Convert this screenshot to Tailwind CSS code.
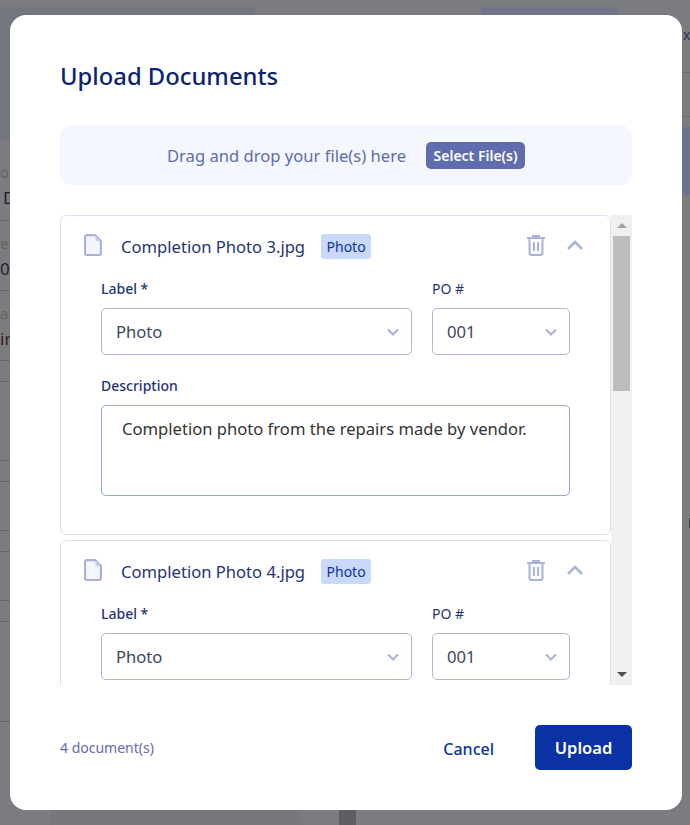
<!doctype html>
<html lang="en">

<head>
    <meta charset="UTF-8">
    <title>Upload Documents</title>
    <script src="https://cdn.jsdelivr.net/npm/@tailwindcss/browser@4"></script>
</head>

<body class="bg-[#7b7c80] font-['Noto_Sans',sans-serif]">

    <div class="relative w-[690px] h-[825px] overflow-hidden">

        <!-- Dimmed page behind the modal -->
        <div class="absolute left-0 top-[7px] w-[255px] h-[133px] bg-[#74767f]"></div>
        <div class="absolute left-[481px] top-[7px] w-[136px] h-[10px] bg-[#70758a]"></div>
        <div class="absolute left-0 top-[161px] text-[15px] text-[#626266]">o</div>
        <div class="absolute left-[3px] top-[185px] text-[17px] text-[#1c2230]">D</div>
        <div class="absolute left-0 top-[220px] w-[10px] h-px bg-[#66666a]"></div>
        <div class="absolute left-0 top-[232px] text-[15px] text-[#626266]">et</div>
        <div class="absolute left-0 top-[256px] text-[17px] text-[#1c2230]">0/</div>
        <div class="absolute left-0 top-[290px] w-[10px] h-px bg-[#66666a]"></div>
        <div class="absolute left-0 top-[302px] text-[15px] text-[#626266]">at</div>
        <div class="absolute left-0 top-[326px] text-[17px] text-[#3a1c24]">ir</div>
        <div class="absolute left-0 top-[360px] w-[10px] h-px bg-[#66666a]"></div>
        <div class="absolute left-0 top-[381px] w-[10px] h-px bg-[#66666a]"></div>
        <div class="absolute left-0 top-[460px] w-[10px] h-px bg-[#66666a]"></div>
        <div class="absolute left-0 top-[481px] w-[10px] h-px bg-[#66666a]"></div>
        <div class="absolute left-0 top-[530px] w-[10px] h-px bg-[#66666a]"></div>
        <div class="absolute left-0 top-[551px] w-[10px] h-px bg-[#66666a]"></div>
        <div class="absolute left-0 top-[600px] w-[10px] h-px bg-[#66666a]"></div>
        <div class="absolute left-0 top-[621px] w-[10px] h-px bg-[#66666a]"></div>
        <div class="absolute left-0 top-[721px] w-[10px] h-px bg-[#66666a]"></div>
        <div class="absolute left-[50px] top-[775px] w-[250px] h-[50px] bg-[#77787b]"></div>
        <div class="absolute left-[339px] top-[810px] w-[17px] h-[15px] bg-[#5e5e62]"></div>
        <div class="absolute left-[683px] top-[24px] text-[14px] text-[#2b3558]">x</div>
        <div class="absolute left-[682px] top-[72px] w-[8px] h-px bg-[#6c6d74]"></div>
        <div class="absolute left-[682px] top-[116px] w-[8px] h-px bg-[#6c6d74]"></div>
        <div class="absolute left-[682px] top-[127px] w-[8px] h-[68px] bg-[#6e7388]"></div>
        <div class="absolute left-[689px] top-[518px] w-px h-[10px] bg-[#44464f]"></div>

        <!-- Modal -->
        <div class="absolute left-[10px] top-[15px] w-[672px] h-[795px] bg-white rounded-[16px] px-[50px] flex flex-col">
            <h2 class="mt-[43px] h-[36px] leading-[36px] text-[23.8px] font-medium text-[#0a2472]">Upload Documents</h2>

            <div class="mt-[31px] h-[60px] shrink-0 bg-[#f4f7fe] rounded-[12px] flex items-center justify-center gap-5 text-[16.6px] text-[#5f6cae]">
                <span class="translate-y-px">Drag and drop your file(s) here</span>
                <span class="w-[99px] h-[27px] flex items-center justify-center bg-[#5f6cae] rounded-[5px] text-white text-[14px] font-semibold">Select File(s)</span>
            </div>

            <div class="mt-[30px] h-[470px] shrink-0 flex overflow-hidden">
                <div class="w-[551px] shrink-0 flex flex-col gap-[5px]">

                    <!-- Photo 3 -->
                    <div class="h-[320px] shrink-0 border border-[#dcdfee] rounded-[6px] px-10 relative">
                        <div class="h-[61px] flex items-center">
                            <svg class="absolute left-[23px] top-[18px]" width="18" height="22" viewBox="0 0 18 22" fill="#f5f6fc" stroke="#a9b2da" stroke-width="2.2" stroke-linejoin="round"><path d="M3 1.100h8l5.900 6V19a2 2 0 0 1-2 2H3a2 2 0 0 1-2-2V3a2 2 0 0 1 2-1.900z"/><path d="M11.500 1.500 16.500 7h-5z" fill="#c9cfe9" stroke="none"/></svg>
                            <span class="ml-[20px] translate-y-px text-[16.6px] text-[#1f3478]">Completion Photo 3.jpg</span>
                            <span class="ml-[16px] w-[50px] h-[25px] flex items-center justify-center bg-[#c9d8fb] rounded-[3px] text-[14px] text-[#0a32a5]">Photo</span>
                            <svg class="absolute left-[465px] top-[19px]" width="20" height="21" viewBox="0 0 20 21" fill="none" stroke="#a9b2da" stroke-width="2"><path d="M1 3h18M7 3V1h6v2"/><path d="M3.500 3.500V18a2 2 0 0 0 2 2h9a2 2 0 0 0 2-2V3.500"/><path d="M8 7v9M12 7v9"/></svg>
                            <svg class="absolute left-[505px] top-[24px]" width="18" height="11" viewBox="0 0 18 11" fill="none" stroke="#a9b2da" stroke-width="2.5"><path d="M2 9l7-7 7 7"/></svg>
                        </div>
                        <div class="flex gap-5">
                            <div class="w-[311px]">
                                <label class="block h-[20px] mt-[2px] leading-[20px] text-[14px] font-medium text-[#1f3478]">Label *</label>
                                <div class="mt-[9px] h-[47px] border border-[#adb5d8] rounded-[5px] flex items-center justify-between pl-[14px] pr-[11px] text-[16.6px] text-[#3c4560]">
                                    <span class="translate-y-px">Photo</span>
                                    <svg width="14" height="8" viewBox="0 0 14 8" fill="none" stroke="#a9b2da" stroke-width="2"><path d="M2 1.500l5 5 5-5"/></svg>
                                </div>
                            </div>
                            <div class="w-[138px]">
                                <label class="block h-[20px] mt-[2px] leading-[20px] text-[14px] text-[#1f3478]">PO #</label>
                                <div class="mt-[9px] h-[47px] border border-[#adb5d8] rounded-[5px] flex items-center justify-between pl-[14px] pr-[11px] text-[16.6px] text-[#3c4560]">
                                    <span class="translate-y-px">001</span>
                                    <svg width="14" height="8" viewBox="0 0 14 8" fill="none" stroke="#a9b2da" stroke-width="2"><path d="M2 1.500l5 5 5-5"/></svg>
                                </div>
                            </div>
                        </div>
                        <label class="block mt-[21px] h-[20px] leading-[20px] text-[14px] font-medium text-[#1f3478]">Description</label>
                        <div class="mt-[9px] h-[91px] border border-[#8fa5e4] rounded-[5px] px-5 py-[11px] text-[16.6px] leading-[24px] text-[#333]">Completion photo from the repairs made by vendor.</div>
                    </div>

                    <!-- Photo 4 -->
                    <div class="h-[320px] shrink-0 border border-[#dcdfee] rounded-[6px] px-10 relative">
                        <div class="h-[61px] flex items-center">
                            <svg class="absolute left-[23px] top-[18px]" width="18" height="22" viewBox="0 0 18 22" fill="#f5f6fc" stroke="#a9b2da" stroke-width="2.2" stroke-linejoin="round"><path d="M3 1.100h8l5.900 6V19a2 2 0 0 1-2 2H3a2 2 0 0 1-2-2V3a2 2 0 0 1 2-1.900z"/><path d="M11.500 1.500 16.500 7h-5z" fill="#c9cfe9" stroke="none"/></svg>
                            <span class="ml-[20px] translate-y-px text-[16.6px] text-[#1f3478]">Completion Photo 4.jpg</span>
                            <span class="ml-[16px] w-[50px] h-[25px] flex items-center justify-center bg-[#c9d8fb] rounded-[3px] text-[14px] text-[#0a32a5]">Photo</span>
                            <svg class="absolute left-[465px] top-[19px]" width="20" height="21" viewBox="0 0 20 21" fill="none" stroke="#a9b2da" stroke-width="2"><path d="M1 3h18M7 3V1h6v2"/><path d="M3.500 3.500V18a2 2 0 0 0 2 2h9a2 2 0 0 0 2-2V3.500"/><path d="M8 7v9M12 7v9"/></svg>
                            <svg class="absolute left-[505px] top-[24px]" width="18" height="11" viewBox="0 0 18 11" fill="none" stroke="#a9b2da" stroke-width="2.5"><path d="M2 9l7-7 7 7"/></svg>
                        </div>
                        <div class="flex gap-5">
                            <div class="w-[311px]">
                                <label class="block h-[20px] mt-[2px] leading-[20px] text-[14px] font-medium text-[#1f3478]">Label *</label>
                                <div class="mt-[9px] h-[47px] border border-[#adb5d8] rounded-[5px] flex items-center justify-between pl-[14px] pr-[11px] text-[16.6px] text-[#3c4560]">
                                    <span class="translate-y-px">Photo</span>
                                    <svg width="14" height="8" viewBox="0 0 14 8" fill="none" stroke="#a9b2da" stroke-width="2"><path d="M2 1.500l5 5 5-5"/></svg>
                                </div>
                            </div>
                            <div class="w-[138px]">
                                <label class="block h-[20px] mt-[2px] leading-[20px] text-[14px] text-[#1f3478]">PO #</label>
                                <div class="mt-[9px] h-[47px] border border-[#adb5d8] rounded-[5px] flex items-center justify-between pl-[14px] pr-[11px] text-[16.6px] text-[#3c4560]">
                                    <span class="translate-y-px">001</span>
                                    <svg width="14" height="8" viewBox="0 0 14 8" fill="none" stroke="#a9b2da" stroke-width="2"><path d="M2 1.500l5 5 5-5"/></svg>
                                </div>
                            </div>
                        </div>
                    </div>
                </div>

                <!-- Scrollbar -->
                <div class="w-[21px] shrink-0 bg-[#f0f0f0] flex flex-col items-center">
                    <div class="h-[21px] flex items-center"><div class="w-0 h-0 border-x-[5px] border-x-transparent border-b-[5px] border-b-[#a3a3a3]"></div></div>
                    <div class="w-[17px] h-[155px] bg-[#bdbdbd]"></div>
                    <div class="mt-auto h-[21px] flex items-center"><div class="w-0 h-0 border-x-[5px] border-x-transparent border-t-[5px] border-t-[#505050]"></div></div>
                </div>
            </div>

            <div class="mt-[40px] flex items-center justify-between">
                <span class="text-[14px] text-[#5f6cae]">4 document(s)</span>
                <div class="flex items-center gap-[41px]">
                    <span class="translate-y-px text-[16px] font-medium text-[#0a32a5]">Cancel</span>
                    <span class="w-[97px] h-[45px] pt-px flex items-center justify-center bg-[#0a32a5] rounded-[5px] text-[16.5px] font-semibold text-white">Upload</span>
                </div>
            </div>
        </div>
    </div>

</body>

</html>
